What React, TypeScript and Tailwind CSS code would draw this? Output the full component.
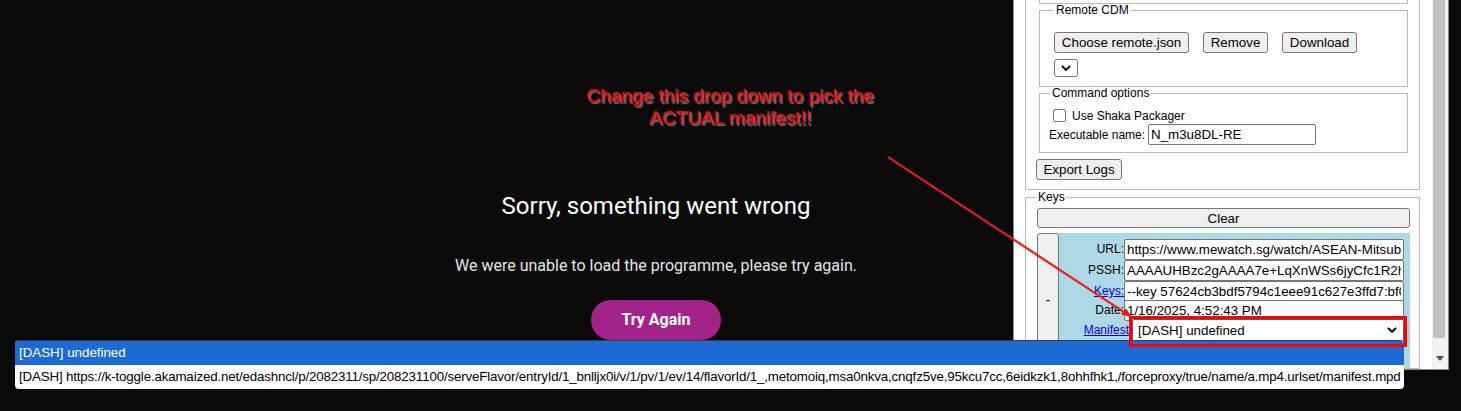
import type { ReactNode } from "react";

const btn =
  "bg-[#efefef] border border-[#767676] rounded-[3px] text-[13.33px] leading-[15px] text-black text-center";
const field =
  "h-[21px] border border-[#767676] rounded-[2px] bg-white px-[2px] text-[13.33px] text-black outline-none";
const groove = "border-[#bababa]";

function Chevron() {
  return (
    <svg width="10" height="6" viewBox="0 0 10 6">
      <path d="M1 1l4 4 4-4" fill="none" stroke="#000" strokeWidth="1.8" />
    </svg>
  );
}

function KeyRow({ label, value, className = "" }: { label: ReactNode; value: string; className?: string }) {
  return (
    <div className={`flex items-center justify-end ${className}`}>
      <span className="text-[12px] leading-[14px]">{label}</span>
      <input readOnly value={value} className={`${field} w-[280px]`} />
    </div>
  );
}

function ExtensionPanel() {
  return (
    <div className="absolute left-[1013px] top-0 w-[436px] h-[370px] flex bg-white border-l border-r border-b border-[#8a8a8a] overflow-hidden text-black">
      <div className="w-[418px] overflow-hidden">
        {/* settings group, scrolled so its top is cut off */}
        <div className={`ml-[11px] w-[395px] border-x border-b ${groove} pl-[10px] pr-[11px] pb-[8px]`}>
          <div className={`ml-[3px] w-[369px] h-[4px] border-x border-b ${groove}`} />

          <fieldset className={`ml-[3px] w-[369px] border ${groove} pl-[14px] pt-[16px] pb-[9px]`}>
            <legend className="px-[2px] text-[12px] leading-[12px]">Remote CDM</legend>
            <div className="flex gap-[14px]">
              <button className={`${btn} w-[135px] h-[21px]`}>Choose remote.json</button>
              <button className={`${btn} w-[65px] h-[21px]`}>Remove</button>
              <button className={`${btn} w-[75px] h-[21px]`}>Download</button>
            </div>
            <div className="mt-[6px] w-[24px] h-[18px] border border-[#767676] rounded-[3px] flex items-center justify-center">
              <Chevron />
            </div>
          </fieldset>

          <fieldset className={`ml-[3px] w-[369px] border ${groove} pt-[8px] pb-[7px]`}>
            <legend className="ml-[10px] px-[2px] text-[12px] leading-[12px]">Command options</legend>
            <div className="h-[17px] flex items-center pl-[13px]">
              <span className="w-[13px] h-[13px] border border-[#767676] rounded-[2px] bg-white" />
              <span className="ml-[6px] text-[12px] leading-[14px]">Use Shaka Packager</span>
            </div>
            <div className="h-[21px] flex items-center pl-[9px]">
              <span className="text-[12px] leading-[14px] mr-[3px]">Executable name:</span>
              <input readOnly value="N_m3u8DL-RE" className={`${field} w-[168px]`} />
            </div>
          </fieldset>

          <button className={`${btn} mt-[6px] w-[86px] h-[21px]`}>Export Logs</button>
        </div>

        <fieldset className={`mt-[1px] ml-[11px] w-[395px] border ${groove} pl-[11px]`}>
          <legend className="px-[1px] text-[12px] leading-[12px]">Keys</legend>
          <button className={`${btn} mt-[5px] w-[373px] h-[20px]`}>Clear</button>
          <div className="mt-[3px] flex">
            <button className={`${btn} w-[22px] h-[134px]`}>-</button>
            <div className="w-[351px] bg-[#add8e6] pt-[6px] pr-[6px] pb-[26px]">
              <KeyRow label="URL:" value="https://www.mewatch.sg/watch/ASEAN-Mitsubishi-Electric-Cup" />
              <KeyRow label="PSSH:" value="AAAAUHBzc2gAAAA7e+LqXnWSs6jyCfc1R2h7QAAAADA" />
              <KeyRow
                label={<a className="text-[#0000ee] underline">Keys:</a>}
                value="--key 57624cb3bdf5794c1eee91c627e3ffd7:bf0c1e"
              />
              <KeyRow label="Date:" value="1/16/2025, 4:52:43 PM" className="-mt-[2px]" />
              <div className="-mt-[2px] flex items-center justify-end gap-[3px]">
                <a className="text-[12px] leading-[14px] text-[#0000ee] underline">Manifest</a>
                <div className="w-[272px] h-[23px] border border-[#5c5c5c] rounded-[2px] bg-white flex items-center justify-between pl-[5px] pr-[6px] shadow-[2px_3px_4px_rgba(0,0,0,0.35)]">
                  <span className="text-[13.33px] leading-[15px]">[DASH] undefined</span>
                  <Chevron />
                </div>
              </div>
            </div>
          </div>
        </fieldset>
      </div>

      {/* scrollbar */}
      <div className="w-[16px] bg-[#f1f1f1] flex flex-col">
        <div className="ml-[1px] w-[12px] h-[338px] bg-[#c1c1c1]" />
        <div className="mt-[18px] flex justify-center pr-[1px]">
          <svg width="8" height="5" viewBox="0 0 8 5">
            <path d="M0 0h8L4 5z" fill="#505050" />
          </svg>
        </div>
      </div>
    </div>
  );
}

function ManifestOptions() {
  return (
    <div className="absolute left-[15px] top-[340px] w-[1389px] rounded-[4px] overflow-hidden border-t border-[#3c3c3c] bg-white text-[13.33px] leading-[24px] whitespace-nowrap">
      <div className="h-[24px] px-[4px] bg-[#1c6bd5] text-white">[DASH] undefined</div>
      <div className="h-[24px] px-[4px] text-black overflow-hidden tracking-[-0.16px]">
        [DASH] https://k-toggle.akamaized.net/edashncl/p/2082311/sp/208231100/serveFlavor/entryId/1_bnlljx0i/v/1/pv/1/ev/14/flavorId/1_,metomoiq,msa0nkva,cnqfz5ve,95kcu7cc,6eidkzk1,8ohhfhk1,/forceproxy/true/name/a.mp4.urlset/manifest.mpd
      </div>
    </div>
  );
}

function Annotation() {
  return (
    <>
      <div className="absolute left-[530px] top-[85px] w-[400px] text-center text-[19px] leading-[22px] text-[#ff0000] [text-shadow:1px_1px_0_#555,2px_2px_1px_#777]">
        Change this drop down to pick the
        <br />
        ACTUAL manifest!!
      </div>
      <svg className="absolute inset-0 pointer-events-none" width="1461" height="411">
        <line x1="889" y1="158" x2="1125" y2="313" stroke="#555" strokeWidth="2" opacity="0.5" />
        <line x1="888" y1="157" x2="1124" y2="312" stroke="#ff1414" strokeWidth="2" />
        <polygon points="1132,317 1121.4,314.8 1125.8,308.2" fill="#ff1414" />
      </svg>
      <div className="absolute left-[1129px] top-[316px] w-[278px] h-[31px] border-[3px] border-[#ff0000]" />
    </>
  );
}

export default function App() {
  return (
    <div className="relative w-[1461px] h-[411px] overflow-hidden bg-[#0a0a0a] font-['Liberation_Sans',Arial,sans-serif]">
      <main className="w-[1312px] flex flex-col items-center pt-[188px] font-['Roboto',sans-serif]">
        <h1 className="text-[24px] leading-[36px] font-normal text-white">Sorry, something went wrong</h1>
        <p className="mt-[30px] text-[16px] leading-[24px] text-[#e6e6e6]">
          We were unable to load the programme, please try again.
        </p>
        <button className="mt-[22px] w-[130px] h-[40px] rounded-full bg-[#a4238b] text-white text-[16px] font-bold">
          Try Again
        </button>
      </main>
      <ExtensionPanel />
      <ManifestOptions />
      <Annotation />
    </div>
  );
}
